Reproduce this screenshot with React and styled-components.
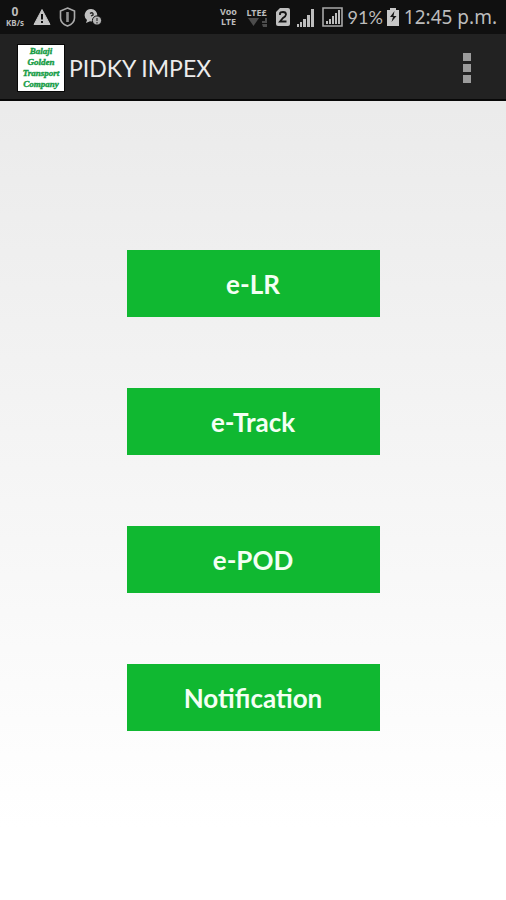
import React from "react";
import styled, { createGlobalStyle } from "styled-components";

const GlobalStyle = createGlobalStyle`
  * { box-sizing: border-box; }
  html, body { margin: 0; }
  body { font-family: Lato, "Open Sans", sans-serif; background: #fff; }
`;

const Screen = styled.div`
  display: flex;
  flex-direction: column;
  min-height: 100vh;
  background: linear-gradient(#e8e8e8, #ffffff 92%);
`;

const StatusBar = styled.div`
  display: flex;
  align-items: center;
  justify-content: space-between;
  height: 34px;
  padding: 0 9px 0 5px;
  background: #101010;
  color: #bcbcbc;
`;

const StatusGroup = styled.div`
  display: flex;
  align-items: center;
  gap: ${(p) => p.$gap}px;
`;

const Stack = styled.span`
  display: flex;
  flex-direction: column;
  align-items: center;
  width: ${(p) => p.$width}px;
  font-family: "Noto Sans", sans-serif;
  font-weight: 700;
  font-size: 9px;
  line-height: 10px;
`;

const Speed = styled.span`
  font-size: 12px;
  line-height: 12px;
`;

const SpeedUnit = styled.span`
  font-size: 8px;
  line-height: 10px;
`;

const StatusText = styled.span`
  font-family: ${(p) => (p.$wide ? '"Noto Sans"' : "Lato")}, sans-serif;
  font-size: ${(p) => (p.$wide ? 19 : 18)}px;
  line-height: 24px;
  white-space: nowrap;
`;

const Glyph = styled.svg`
  display: block;
  flex: none;
`;

const ActionBar = styled.header`
  display: flex;
  align-items: center;
  height: 67px;
  padding: 2px 27px 0 17px;
  background: #222222;
  border-bottom: 2px solid #080808;
`;

const Logo = styled.div`
  display: flex;
  flex-direction: column;
  justify-content: center;
  align-items: center;
  width: 48px;
  height: 48px;
  border: 1px solid #080808;
  background: #fff;
  color: #159c45;
  font: italic 700 9px/11px "Liberation Serif", serif;
  -webkit-text-stroke: 0.4px #159c45;
`;

const Title = styled.h1`
  flex: 1;
  margin: 0 0 0 4px;
  color: #ececec;
  font-size: 23px;
  line-height: 32px;
  font-weight: 400;
`;

const MenuButton = styled.button`
  padding: 8px;
  border: 0;
  background: none;
`;

const Menu = styled.main`
  flex: 1;
  display: flex;
  flex-direction: column;
  align-items: center;
  gap: 71px;
  padding: 149px 0;
`;

const MenuItem = styled.button`
  width: 50%;
  height: 67px;
  padding: 0;
  border: 0;
  background: #10b831;
  color: #f4fff4;
  font-family: Lato, sans-serif;
  font-size: 26px;
  line-height: 32px;
  font-weight: 700;
`;

const items = ["e-LR", "e-Track", "e-POD", "Notification"];

function WarningIcon() {
  return (
    <Glyph width="18" height="18" viewBox="0 0 18 18">
      <path d="M9 1.500 17 16.500H1Z" fill="#c4c4c4" stroke="#c4c4c4" strokeLinejoin="round" />
      <path d="M9 6v5.500M9 13v2" stroke="#111" strokeWidth="2" />
    </Glyph>
  );
}

function ShieldIcon() {
  return (
    <Glyph width="17" height="20" viewBox="0 0 17 20" fill="none">
      <path d="M8.500 1 15.500 4v7c0 3.500-3 6.500-7 8-4-1.500-7-4.500-7-8V4Z" stroke="#aaa" strokeWidth="1.600" />
      <path d="M8.500 5v10" stroke="#909090" strokeWidth="2.600" />
    </Glyph>
  );
}

function ChatIcon() {
  return (
    <Glyph width="18" height="18" viewBox="0 0 18 18">
      <path d="M7 1a6.200 6.200 0 1 1-1 12.300L2 15l1-3A6.200 6.200 0 0 1 7 1Z" fill="#c0c0c0" />
      <path d="M6 5.500q2-1.500 3 0v1.500L7 8" fill="none" stroke="#222" strokeWidth="1.300" />
      <circle cx="13" cy="12.500" r="4.600" fill="#b5b5b5" stroke="#111" />
      <path d="M13 10v3M13 14v1.500" stroke="#333" strokeWidth="1.200" />
    </Glyph>
  );
}

function DataIcon() {
  return (
    <Glyph width="24" height="9" viewBox="0 0 24 9" fill="#4c4c4c">
      <path d="M3 0h11L8.500 8Z" />
      <path d="M17 3h3V0h2v5h-5ZM17 6h5v3h-4Z" />
    </Glyph>
  );
}

function SimIcon() {
  return (
    <Glyph width="14" height="18" viewBox="0 0 14 18">
      <path d="M4 0h8q2 0 2 2v14q0 2-2 2H2q-2 0-2-2V4Z" fill="#c0c0c0" />
      <path d="M4 7V5.500Q4 4 7 4t3 2.500Q10 8 7 10l-3 3.500h6.500" fill="none" stroke="#151515" strokeWidth="1.800" />
    </Glyph>
  );
}

function SignalIcon() {
  return (
    <Glyph width="18" height="19" viewBox="0 0 18 19" fill="#bdbdbd">
      <path d="M0 16h2v3H0ZM3 14h2v5H3ZM6 11h3v8H6ZM10 7h3v12h-3ZM14 1h3v18h-3Z" />
    </Glyph>
  );
}

function BoxedSignalIcon() {
  return (
    <Glyph width="21" height="20" viewBox="0 0 21 20">
      <path d="M1 1h19v18H1Z" fill="none" stroke="#a8a8a8" strokeWidth="1.600" />
      <path d="M4 14h2v3H4ZM7 12h2v5H7ZM10 9h2v8h-2ZM13 6h2v11h-2ZM16 3h2v14h-2Z" fill="#bdbdbd" />
    </Glyph>
  );
}

function BatteryIcon() {
  return (
    <Glyph width="12" height="18" viewBox="0 0 12 18">
      <path d="M3 0h6v2h3v16H0V2h3Z" fill="#c8c8c8" />
      <path d="M7.500 3 3 9h3l-1.500 5L9.500 8H6.500Z" fill="#151515" />
    </Glyph>
  );
}

function OverflowIcon() {
  return (
    <Glyph width="8" height="30" viewBox="0 0 8 30" fill="#9c9c9c">
      <path d="M0 0h8v8H0ZM0 11h8v8H0ZM0 22h8v8H0Z" />
    </Glyph>
  );
}

export default function App() {
  return (
    <>
      <GlobalStyle />
      <Screen>
        <StatusBar>
          <StatusGroup $gap={8}>
            <Stack $width={20}>
              <Speed>0</Speed>
              <SpeedUnit>KB/s</SpeedUnit>
            </Stack>
            <WarningIcon />
            <ShieldIcon />
            <ChatIcon />
          </StatusGroup>
          <StatusGroup $gap={7}>
            <Stack $width={18}>
              <span>Voo</span>
              <span>LTE</span>
            </Stack>
            <Stack $width={24}>
              <span>LTE£</span>
              <DataIcon />
            </Stack>
            <SimIcon />
            <SignalIcon />
            <StatusGroup $gap={5}>
              <BoxedSignalIcon />
              <StatusGroup $gap={4}>
                <StatusText>91%</StatusText>
                <BatteryIcon />
              </StatusGroup>
              <StatusText $wide>12:45 p.m.</StatusText>
            </StatusGroup>
          </StatusGroup>
        </StatusBar>
        <ActionBar>
          <Logo>
            <span>Balaji</span>
            <span>Golden</span>
            <span>Transport</span>
            <span>Company</span>
          </Logo>
          <Title>PIDKY IMPEX</Title>
          <MenuButton aria-label="More options">
            <OverflowIcon />
          </MenuButton>
        </ActionBar>
        <Menu>
          {items.map((label) => (
            <MenuItem key={label}>{label}</MenuItem>
          ))}
        </Menu>
      </Screen>
    </>
  );
}
